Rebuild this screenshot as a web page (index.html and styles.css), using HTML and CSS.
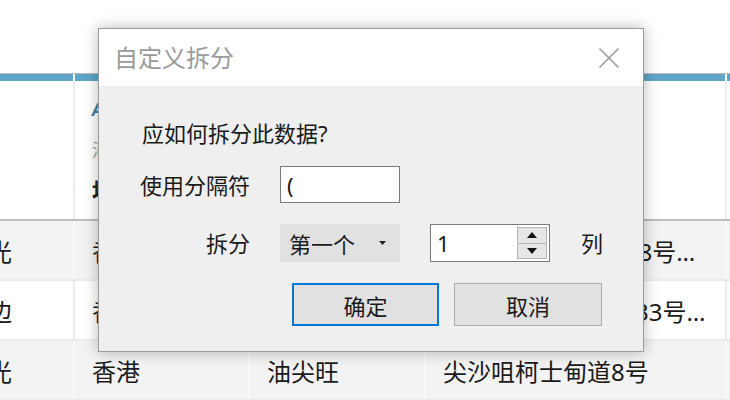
FILE: index.html
```html
<!DOCTYPE html>
<html lang="zh-CN">
<head>
<meta charset="utf-8">
<title>自定义拆分</title>
<link rel="stylesheet" href="styles.css">
</head>
<body>
<div class="page">
  <div class="topspace"></div>
  <div class="grid">
    <div class="hdr">
      <div class="hcell w1"><div class="bar"></div><div class="hbody"></div></div>
      <div class="hcell w2"><div class="bar"></div><div class="hbody"><span class="type">Abc</span><span class="src">酒店信息</span><span class="fname">地址</span></div></div>
      <div class="hcell w3"><div class="bar"></div><div class="hbody"><span class="type">Abc</span><span class="src">酒店信息</span><span class="fname">区域</span></div></div>
      <div class="hcell w4"><div class="bar"></div><div class="hbody"><span class="type">Abc</span><span class="src">酒店信息</span><span class="fname">街道</span></div></div>
      <div class="hcell w5"><div class="bar"></div><div class="hbody"></div></div>
    </div>
    <div class="row alt">
      <div class="cell w1"><span class="clip">观光</span></div>
      <div class="cell w2">香港</div>
      <div class="cell w3">油尖旺</div>
      <div class="cell w4">尖沙咀弥敦道中118号…</div>
      <div class="cell w5"></div>
    </div>
    <div class="row">
      <div class="cell w1"><span class="clip">海边</span></div>
      <div class="cell w2">香港</div>
      <div class="cell w3">油尖旺</div>
      <div class="cell w4">尖沙咀梳士巴利道33号…</div>
      <div class="cell w5"></div>
    </div>
    <div class="row alt">
      <div class="cell w1"><span class="clip">观光</span></div>
      <div class="cell w2">香港</div>
      <div class="cell w3">油尖旺</div>
      <div class="cell w4">尖沙咀柯士甸道8号</div>
      <div class="cell w5"></div>
    </div>
  </div>

  <div class="dialog">
    <div class="dlg-title">
      <span class="dlg-caption">自定义拆分</span>
      <svg class="close" width="22" height="22" viewBox="0 0 22 22"><path d="M1.5 1.5 L20.5 20.5 M20.5 1.5 L1.5 20.5" stroke="#9b9b9b" stroke-width="1.6" fill="none"/></svg>
    </div>
    <div class="dlg-body">
      <div class="question">应如何拆分此数据?</div>
      <div class="form">
        <div class="label">使用分隔符</div>
        <div class="textbox">(</div>
        <div class="spacer"></div>
        <div class="label">拆分</div>
        <div class="select"><span>第一个</span><svg width="7" height="4" viewBox="0 0 7 4"><path d="M0 0 H7 L3.5 4 Z" fill="#222"/></svg></div>
        <div class="spin">
          <span>1</span>
          <div class="spin-btns">
            <div class="spin-btn"><svg width="10" height="6" viewBox="0 0 10 6"><path d="M5 0 L10 6 H0 Z" fill="#111"/></svg></div>
            <div class="spin-btn"><svg width="10" height="6" viewBox="0 0 10 6"><path d="M0 0 H10 L5 6 Z" fill="#111"/></svg></div>
          </div>
        </div>
        <div class="unit">列</div>
      </div>
      <div class="buttons">
        <div class="btn primary">确定</div>
        <div class="btn">取消</div>
      </div>
    </div>
  </div>
</div>
</body>
</html>
```
FILE: styles.css
```css
html, body {
  margin: 0;
  padding: 0;
  background: #ffffff;
}
body {
  font-family: "Noto Sans", "Noto Sans CJK SC", sans-serif;
  color: #1a1a1a;
}
.page {
  position: relative;
  width: 730px;
  height: 400px;
  overflow: hidden;
}
.topspace {
  height: 73px;
}
.grid {
  width: 760px;
}
.hdr {
  display: flex;
  border-top: 1px solid #bdbdbd;
  border-bottom: 2px solid #bdbdbd;
  height: 145px;
}
.hcell {
  display: flex;
  flex-direction: column;
  flex: none;
}
.bar {
  height: 7px;
  margin-right: 2px;
  background: #60a5c7;
}
.hbody {
  flex: 1;
  border-right: 2px solid #ededed;
  display: flex;
  flex-direction: column;
  padding: 17px 0 0 17px;
  white-space: nowrap;
  overflow: hidden;
}
.type {
  font-size: 17px;
  font-weight: bold;
  font-style: italic;
  color: #3d7f9f;
  line-height: 24px;
}
.src {
  font-size: 18px;
  color: #a2a2a2;
  line-height: 24px;
  margin-top: 16px;
}
.fname {
  font-size: 22px;
  font-weight: bold;
  color: #222;
  line-height: 28px;
  margin-top: 14px;
}
.w1 { width: 75px; }
.w2 { width: 175px; }
.w3 { width: 176px; }
.w4 { width: 301px; }
.w5 { width: 33px; }

.row {
  display: flex;
  height: 58px;
  border-bottom: 2px solid #ebebeb;
  background: #ffffff;
}
.row.alt {
  background: #f3f3f3;
}
.cell {
  flex: none;
  box-sizing: border-box;
  display: flex;
  align-items: center;
  padding-left: 17px;
  font-size: 24px;
  white-space: nowrap;
  overflow: hidden;
  border-right: 2px solid #ececec;
}
.row.alt .cell {
  border-right-color: #f9f9f9;
}
.cell.w1 {
  padding-left: 0;
}
.clip {
  margin-left: -36px;
}

.dialog {
  position: absolute;
  left: 98px;
  top: 28px;
  width: 546px;
  box-sizing: border-box;
  border: 1px solid #9c9c9c;
  box-shadow: 0 0 14px rgba(0, 0, 0, 0.28);
  background: #efefef;
}
.dlg-title {
  height: 57px;
  background: #ffffff;
  display: flex;
  align-items: center;
  justify-content: space-between;
  padding: 0 23px 0 15px;
}
.dlg-caption {
  font-size: 24px;
  color: #9a9a9a;
  line-height: 30px;
}
.close {
  display: block;
  margin-top: 1px;
}
.dlg-body {
  height: 265px;
  box-sizing: border-box;
  padding: 33px 41px 25px 43px;
  display: flex;
  flex-direction: column;
  font-size: 22px;
}
.question {
  line-height: 28px;
  height: 28px;
  white-space: nowrap;
}
.form {
  margin-top: 19px;
  margin-left: -12px;
  display: grid;
  grid-template-columns: 120px 120px 120px auto;
  grid-template-rows: 37px 38px;
  column-gap: 30px;
  row-gap: 21px;
  align-items: center;
}
.label {
  text-align: right;
  line-height: 28px;
  white-space: nowrap;
}
.textbox {
  height: 37px;
  box-sizing: border-box;
  border: 1px solid #7a7a7a;
  background: #ffffff;
  padding-left: 6px;
  display: flex;
  align-items: center;
}
.spacer {
  grid-column: span 2;
}
.select {
  height: 38px;
  box-sizing: border-box;
  background: #e1e1e1;
  display: flex;
  align-items: center;
  justify-content: space-between;
  padding: 0 14px 0 9px;
  white-space: nowrap;
}
.select svg {
  display: block;
}
.spin {
  height: 38px;
  box-sizing: border-box;
  border: 1px solid #7a7a7a;
  background: #ffffff;
  display: flex;
  align-items: center;
  justify-content: space-between;
  padding: 2px 2px 2px 6px;
}
.spin-btns {
  display: flex;
  flex-direction: column;
  width: 30px;
  height: 32px;
  align-self: stretch;
}
.spin-btn {
  flex: 1;
  background: #e6e6e6;
  border: 1px solid #b4b4b4;
  display: flex;
  align-items: center;
  justify-content: center;
}
.spin-btn + .spin-btn {
  border-top: none;
}
.spin-btn svg {
  display: block;
}
.unit {
  padding-left: 1px;
  line-height: 28px;
}
.buttons {
  margin-top: 21px;
  display: flex;
  justify-content: flex-end;
  gap: 15px;
}
.btn {
  width: 148px;
  height: 43px;
  box-sizing: border-box;
  border: 1px solid #adadad;
  background: #e1e1e1;
  display: flex;
  align-items: center;
  justify-content: center;
}
.btn.primary {
  width: 147px;
  border: 2px solid #0078d7;
}
```
